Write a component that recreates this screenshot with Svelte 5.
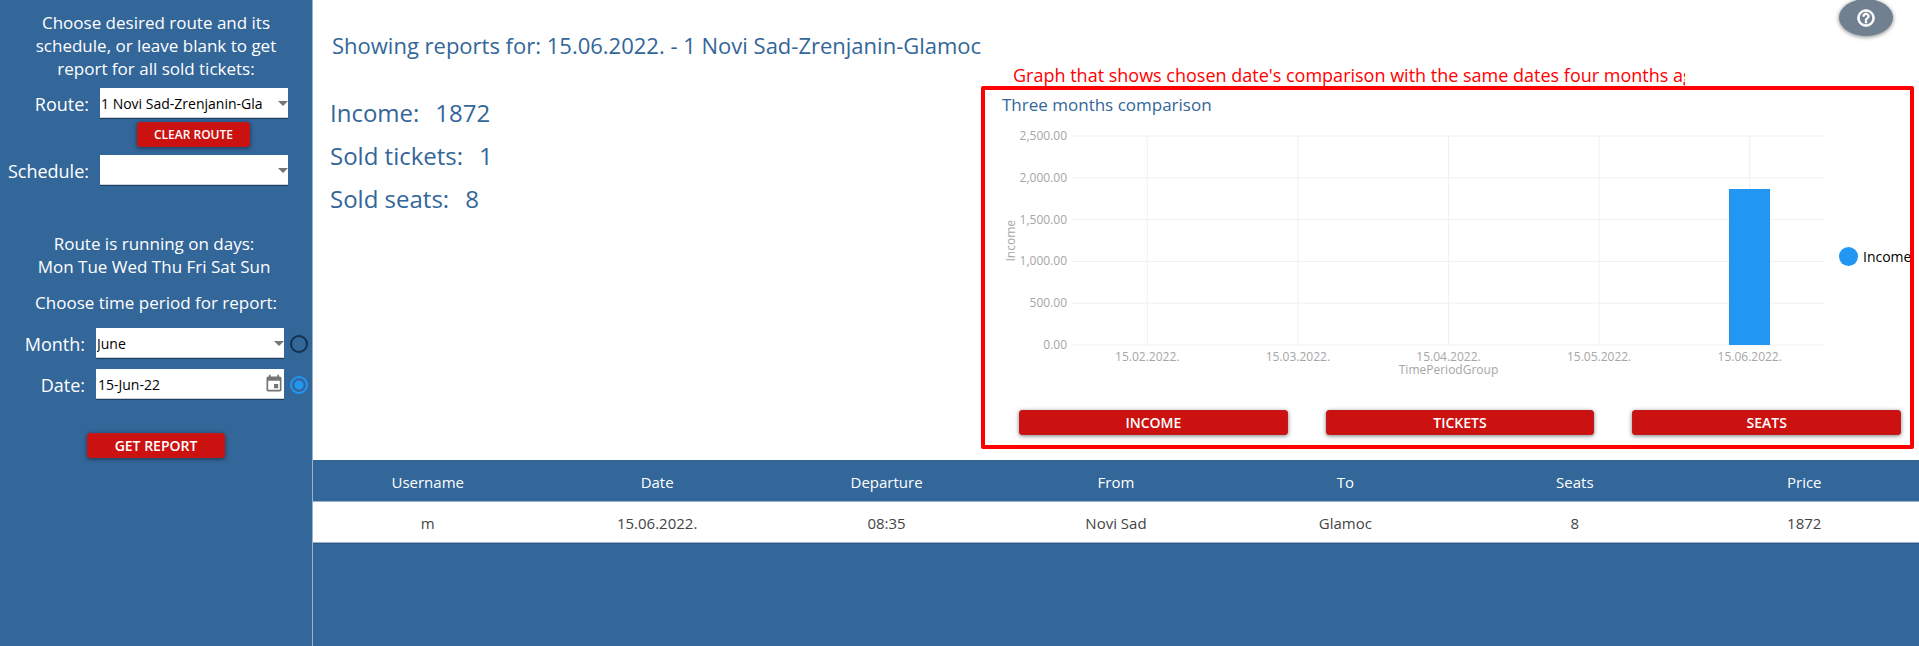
<script>
  const yTicks = ['2,500.00', '2,000.00', '1,500.00', '1,000.00', '500.00', '0.00'];
  const months = [
    { label: '15.02.2022.', value: 0 },
    { label: '15.03.2022.', value: 0 },
    { label: '15.04.2022.', value: 0 },
    { label: '15.05.2022.', value: 0 },
    { label: '15.06.2022.', value: 1872 }
  ];
  const maxValue = 2500;
  const columns = ['Username', 'Date', 'Departure', 'From', 'To', 'Seats', 'Price'];
  const rows = [['m', '15.06.2022.', '08:35', 'Novi Sad', 'Glamoc', '8', '1872']];
  let period = $state('date');
</script>

<div class="page">
  <aside>
    <p class="intro">Choose desired route and its schedule, or leave blank to get report for all sold tickets:</p>

    <div class="field">
      <label for="route">Route:</label>
      <div class="box">
        <select id="route"><option>1 Novi Sad-Zrenjanin-Gla</option></select>
        <svg class="arrow" viewBox="0 0 10 5"><path d="M0 0h10L5 5z" /></svg>
      </div>
    </div>
    <button class="red clear">CLEAR ROUTE</button>
    <div class="field schedule">
      <label for="schedule">Schedule:</label>
      <div class="box">
        <select id="schedule"><option></option></select>
        <svg class="arrow" viewBox="0 0 10 5"><path d="M0 0h10L5 5z" /></svg>
      </div>
    </div>

    <p class="days">Route is running on days:<br />Mon Tue Wed Thu Fri Sat Sun</p>
    <p class="choose">Choose time period for report:</p>

    <div class="field period">
      <label for="month">Month:</label>
      <div class="box">
        <select id="month"><option>June</option></select>
        <svg class="arrow" viewBox="0 0 10 5"><path d="M0 0h10L5 5z" /></svg>
      </div>
      <input type="radio" name="period" value="month" aria-label="Use month" bind:group={period} />
    </div>
    <div class="field period date">
      <label for="date">Date:</label>
      <div class="box">
        <input id="date" type="text" value="15-Jun-22" />
        <button class="calendar" aria-label="Open calendar">
          <svg viewBox="0 0 24 24"><path d="M17 12h-5v5h5v-5zM16 1v2H8V1H6v2H5c-1.11 0-1.99.9-1.99 2L3 19c0 1.1.89 2 2 2h14c1.1 0 2-.9 2-2V5c0-1.1-.9-2-2-2h-1V1h-2zm3 18H5V8h14v11z" /></svg>
        </button>
      </div>
      <input type="radio" name="period" value="date" aria-label="Use date" bind:group={period} />
    </div>
    <button class="red get">GET REPORT</button>
  </aside>

  <main>
    <header>
      <h1>Showing reports for: 15.06.2022. - 1 Novi Sad-Zrenjanin-Glamoc</h1>
      <button class="help" aria-label="Help">
        <svg viewBox="0 0 24 24"><path d="M11 18h2v-2h-2v2zm1-16C6.48 2 2 6.48 2 12s4.48 10 10 10 10-4.48 10-10S17.52 2 12 2zm0 18c-4.41 0-8-3.59-8-8s3.59-8 8-8 8 3.59 8 8-3.59 8-8 8zm0-14c-2.21 0-4 1.79-4 4h2c0-1.1.9-2 2-2s2 .9 2 2c0 2-3 1.75-3 5h2c0-2.25 3-2.5 3-5 0-2.21-1.79-4-4-4z" /></svg>
      </button>
    </header>

    <div class="summary">
      <dl>
        <div><dt>Income:</dt><dd>1872</dd></div>
        <div><dt>Sold tickets:</dt><dd>1</dd></div>
        <div><dt>Sold seats:</dt><dd>8</dd></div>
      </dl>

      <div class="graph">
        <div class="note">Graph that shows chosen date's comparison with the same dates four months ago</div>
        <section class="panel">
          <h2>Three months comparison</h2>
          <div class="chart">
            <div class="ytitle"><span>Income</span></div>
            <div class="yaxis">
              {#each yTicks as tick}<span>{tick}</span>{/each}
            </div>
            <div class="plot">
              <svg class="grid" width="100%" height="100%">
                {#each yTicks as _, i}
                  <line x1="0" x2="100%" y1="{i * 20}%" y2="{i * 20}%" />
                {/each}
                {#each months as _, i}
                  <line y1="0" y2="100%" x1="{i * 20 + 10}%" x2="{i * 20 + 10}%" />
                {/each}
              </svg>
              {#each months as m}
                <div class="slot"><div class="bar" style="height: {(m.value / maxValue) * 100}%"></div></div>
              {/each}
            </div>
            <div class="legend"><i></i><span>Income</span></div>
            <div class="xaxis">
              {#each months as m}<span>{m.label}</span>{/each}
            </div>
            <div class="xtitle">TimePeriodGroup</div>
          </div>
          <div class="modes">
            <button class="red">INCOME</button>
            <button class="red">TICKETS</button>
            <button class="red">SEATS</button>
          </div>
        </section>
      </div>
    </div>

    <table>
      <thead>
        <tr>{#each columns as c}<th>{c}</th>{/each}</tr>
      </thead>
      <tbody>
        {#each rows as row}
          <tr>{#each row as cell}<td>{cell}</td>{/each}</tr>
        {/each}
      </tbody>
    </table>
  </main>
</div>

<style>
  :global(body) {
    margin: 0;
  }
  .page {
    display: flex;
    min-height: 100vh;
    background: #336699;
    font-family: 'Open Sans', 'Noto Sans', sans-serif;
  }
  .page * {
    box-sizing: border-box;
  }
  button,
  input,
  select {
    font-family: inherit;
    margin: 0;
  }
  p,
  h1,
  h2,
  dl,
  dd {
    margin: 0;
    font-weight: 400;
  }

  aside {
    flex: none;
    width: 313px;
    padding-top: 11px;
    border-right: 1px solid #99b3cc;
    display: flex;
    flex-direction: column;
    color: #fff;
    font-size: 17px;
    line-height: 23px;
  }
  aside p {
    text-align: center;
  }
  .intro {
    padding: 0 32px;
  }
  .field {
    display: flex;
    align-items: center;
    margin-top: 8px;
  }
  .field label {
    width: 89px;
    margin-right: 11px;
    padding-top: 2px;
    text-align: right;
    font-size: 18px;
  }
  .box {
    position: relative;
    width: 188px;
    height: 31px;
    background: #fff;
    border-bottom: 1px solid #1f3d5c;
    box-shadow: inset 0 -1px #c8d2dc;
    display: flex;
    align-items: center;
  }
  .box select,
  .box input {
    appearance: none;
    flex: 1;
    min-width: 0;
    height: 29px;
    padding: 0 1px;
    border: 0;
    background: none;
    color: #000;
    font-size: 14px;
  }
  .arrow {
    position: absolute;
    right: 0;
    top: 13px;
    width: 10px;
    height: 5px;
    fill: #757575;
    pointer-events: none;
  }
  .calendar {
    padding: 0;
    border: 0;
    background: none;
    height: 20px;
  }
  .calendar svg {
    display: block;
    width: 20px;
    height: 20px;
    fill: #757575;
  }
  .red {
    height: 25px;
    padding: 0;
    border: 1px solid #bf1a1c;
    border-radius: 3px;
    background: #cc1111;
    color: #fff;
    font-size: 14px;
    font-weight: 600;
    line-height: 23px;
    box-shadow: 0 1px 4px rgba(0, 0, 0, 0.5);
  }
  .clear {
    width: 113px;
    margin: 3px 0 0 137px;
    font-size: 12px;
  }
  .days {
    margin-top: 46px;
    padding-right: 4px;
  }
  .choose {
    margin-top: 13px;
  }
  .period {
    margin-top: 14px;
  }
  .period label {
    width: 85px;
  }
  .date {
    margin-top: 10px;
  }
  .date .box input {
    padding-left: 2px;
  }
  input[type='radio'] {
    appearance: none;
    width: 18px;
    height: 18px;
    margin-left: 6px;
    border: 2px solid #152f4a;
    border-radius: 50%;
  }
  input[type='radio']:checked {
    border-color: #2196f3;
    background: radial-gradient(circle, #2196f3 4px, transparent 5px);
  }
  .get {
    width: 138px;
    margin: 33px 0 0 87px;
  }

  main {
    flex: 1;
    min-width: 0;
    color: #336699;
  }
  header {
    display: flex;
    justify-content: space-between;
    height: 64px;
    padding: 0 26px 0 19px;
    background: #fff;
  }
  h1 {
    padding-top: 29px;
    font-size: 22px;
    line-height: 32px;
  }
  .help {
    width: 54px;
    height: 37px;
    margin-top: -1px;
    padding: 0;
    border: 0;
    border-radius: 50%;
    background: #708090;
    box-shadow: 0 1px 4px rgba(0, 0, 0, 0.5);
    display: flex;
    align-items: center;
    justify-content: center;
  }
  .help svg {
    width: 20px;
    height: 20px;
    fill: #fff;
    stroke: #fff;
  }
  .summary {
    display: grid;
    grid-template-columns: minmax(0, 668fr) minmax(0, 938fr);
    background: #fff;
    padding-bottom: 11px;
  }
  dl {
    padding: 27px 0 0 17px;
    font-size: 24px;
    line-height: 43px;
  }
  dl div {
    display: flex;
    gap: 16px;
  }
  .note {
    width: 672px;
    margin-left: 32px;
    height: 22px;
    overflow: hidden;
    white-space: nowrap;
    color: #ff0000;
    font-size: 18px;
    line-height: 22px;
  }
  .panel {
    margin-right: 5px;
    padding: 2px 0 10px;
    border: 4px solid #ff0000;
    border-radius: 2px;
    overflow: hidden;
  }
  h2 {
    padding-left: 17px;
    font-size: 17px;
    line-height: 25px;
  }
  .chart {
    display: grid;
    grid-template-columns: 34px 48px minmax(0, 1fr) 85px;
    grid-template-rows: 209px 18px 14px;
    margin-top: 19px;
    color: #a6a6a6;
    font-size: 12px;
  }
  .ytitle {
    display: flex;
    align-items: center;
    justify-content: flex-end;
  }
  .ytitle span {
    writing-mode: vertical-rl;
    transform: rotate(180deg);
    line-height: 16px;
  }
  .yaxis {
    display: flex;
    flex-direction: column;
    justify-content: space-between;
    align-items: flex-end;
    margin: -8px 0 -8px -10px;
    line-height: 16px;
  }
  .plot {
    position: relative;
    display: grid;
    grid-template-columns: repeat(5, 1fr);
    margin-left: 5px;
  }
  .grid {
    position: absolute;
    inset: 0;
    overflow: visible;
    stroke: #f0f0f0;
  }
  .slot {
    position: relative;
    display: flex;
    align-items: flex-end;
    justify-content: center;
  }
  .bar {
    width: 41px;
    background: #2196f3;
  }
  .legend {
    display: flex;
    align-items: center;
    gap: 5px;
    padding: 32px 0 0 14px;
    color: #000;
    font-size: 14px;
  }
  .legend i {
    flex: none;
    width: 19px;
    height: 19px;
    border-radius: 50%;
    background: #2196f3;
  }
  .xaxis {
    grid-column: 3;
    display: grid;
    grid-template-columns: repeat(5, 1fr);
    margin-left: 5px;
    padding-top: 5px;
    text-align: center;
    line-height: 13px;
  }
  .xtitle {
    grid-column: 3;
    margin-left: 5px;
    text-align: center;
    line-height: 14px;
  }
  .modes {
    display: grid;
    grid-template-columns: repeat(3, 1fr);
    gap: 38px;
    margin: 33px 9px 0 34px;
  }

  table {
    width: 100%;
    table-layout: fixed;
    border-collapse: separate;
    border-spacing: 0;
    font-size: 15px;
    text-align: center;
    box-shadow: 0 1px #2b5781;
  }
  th,
  td {
    height: 41px;
    padding: 1px 0 0;
    border-bottom: 1px solid #99b3cc;
    font-weight: 400;
  }
  th {
    height: 42px;
    padding-top: 3px;
    color: #fff;
  }
  td {
    background: #fff;
    color: #444;
  }
</style>
